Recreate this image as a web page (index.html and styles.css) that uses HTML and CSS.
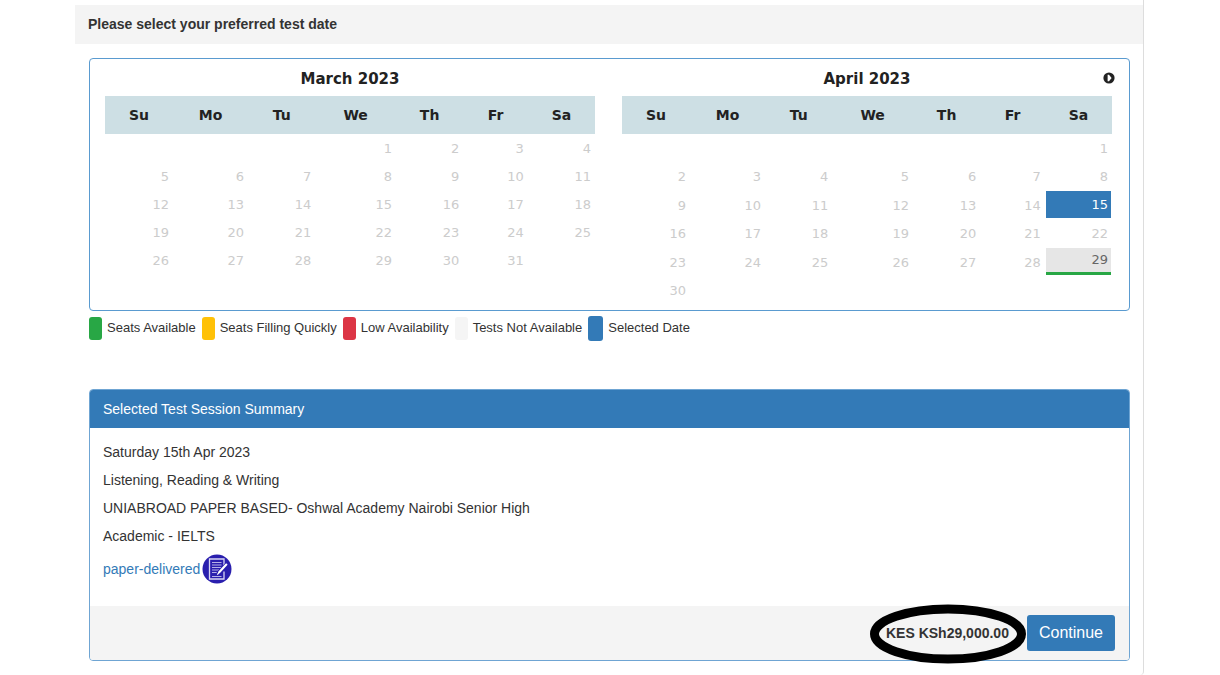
FILE: index.html
```html
<!DOCTYPE html>
<html lang="en">
<head>
<meta charset="utf-8">
<title>Select test date</title>
<link rel="stylesheet" href="styles.css">
</head>
<body>
<main class="panel">
  <h1 class="panel-title">Please select your preferred test date</h1>
  <div class="panel-body">
    <section class="calendar" aria-label="Test dates">
      <div class="month">
        <div class="month-head"><h2 class="month-title">March 2023</h2></div>
        <table class="days">
          <colgroup><col class="c-su"><col class="c-mo"><col class="c-tu"><col class="c-we"><col class="c-th"><col class="c-fr"><col class="c-sa"></colgroup>
          <thead><tr><th>Su</th><th>Mo</th><th>Tu</th><th>We</th><th>Th</th><th>Fr</th><th>Sa</th></tr></thead>
          <tbody>
            <tr><td></td><td></td><td></td><td>1</td><td>2</td><td>3</td><td>4</td></tr>
            <tr><td>5</td><td>6</td><td>7</td><td>8</td><td>9</td><td>10</td><td>11</td></tr>
            <tr><td>12</td><td>13</td><td>14</td><td>15</td><td>16</td><td>17</td><td>18</td></tr>
            <tr><td>19</td><td>20</td><td>21</td><td>22</td><td>23</td><td>24</td><td>25</td></tr>
            <tr><td>26</td><td>27</td><td>28</td><td>29</td><td>30</td><td>31</td><td></td></tr>
          </tbody>
        </table>
      </div>
      <div class="month">
        <div class="month-head">
          <h2 class="month-title">April 2023</h2>
          <button class="next" type="button" aria-label="Next month">
            <svg width="12" height="12" viewBox="0 0 12 12"><circle cx="6" cy="6" r="5.6" fill="#222"/><path d="M4.600 2.700H6L8.600 6 6 9.300H4.600Z" fill="#fff"/></svg>
          </button>
        </div>
        <table class="days">
          <colgroup><col class="c-su"><col class="c-mo"><col class="c-tu"><col class="c-we"><col class="c-th"><col class="c-fr"><col class="c-sa"></colgroup>
          <thead><tr><th>Su</th><th>Mo</th><th>Tu</th><th>We</th><th>Th</th><th>Fr</th><th>Sa</th></tr></thead>
          <tbody>
            <tr><td></td><td></td><td></td><td></td><td></td><td></td><td>1</td></tr>
            <tr><td>2</td><td>3</td><td>4</td><td>5</td><td>6</td><td>7</td><td>8</td></tr>
            <tr><td>9</td><td>10</td><td>11</td><td>12</td><td>13</td><td>14</td><td class="pick"><button class="day day-selected" type="button">15</button></td></tr>
            <tr><td>16</td><td>17</td><td>18</td><td>19</td><td>20</td><td>21</td><td>22</td></tr>
            <tr><td>23</td><td>24</td><td>25</td><td>26</td><td>27</td><td>28</td><td class="pick"><button class="day day-open" type="button">29</button></td></tr>
            <tr><td>30</td><td></td><td></td><td></td><td></td><td></td><td></td></tr>
          </tbody>
        </table>
      </div>
    </section>

    <ul class="legend">
      <li><span class="swatch green"></span>Seats Available</li>
      <li><span class="swatch yellow"></span>Seats Filling Quickly</li>
      <li><span class="swatch red"></span>Low Availability</li>
      <li><span class="swatch gray"></span>Tests Not Available</li>
      <li><span class="swatch blue"></span>Selected Date</li>
    </ul>

    <section class="summary">
      <h2 class="summary-title">Selected Test Session Summary</h2>
      <div class="summary-body">
        <p>Saturday 15th Apr 2023</p>
        <p>Listening, Reading &amp; Writing</p>
        <p>UNIABROAD PAPER BASED- Oshwal Academy Nairobi Senior High</p>
        <p>Academic - IELTS</p>
        <a class="delivery" href="#">paper-delivered
          <svg width="30" height="30" viewBox="0 0 30 30" aria-hidden="true">
            <circle cx="15" cy="15" r="14.5" fill="#2a1fae"/>
            <path d="M22 17.5V25H7.500V5H22v6.500" fill="none" stroke="#d9d6f3" stroke-width="1.300"/>
            <path d="M10 8.500h9.500M10 11h9.500M10 13.500h9.500M10 16h7M10 18.500h5M10 22.500h9.500" stroke="#b5b0e6" stroke-width="1"/>
            <path d="M24.500 10.500 17 18.500 15.500 21" fill="none" stroke="#2a1fae" stroke-width="4"/>
            <path d="M24.300 10.600 17.200 18.200" stroke="#fff" stroke-width="2.200" stroke-linecap="round"/>
            <path d="M17.500 18.200 15.300 20.700" stroke="#fff" stroke-width="1.200"/>
          </svg>
        </a>
      </div>
      <div class="summary-foot">
        <strong class="price">KES KSh29,000.00
          <svg class="ring" viewBox="0 0 156 60" aria-hidden="true"><ellipse cx="78" cy="30" rx="73.500" ry="25" fill="none" stroke="#000" stroke-width="9"/></svg>
        </strong>
        <button class="continue" type="button">Continue</button>
      </div>
    </section>
  </div>
</main>
</body>
</html>
```
FILE: styles.css
```css
* { box-sizing: border-box; }
body {
  margin: 0;
  padding: 0 76px 0 75px;
  background: #fff;
  color: #333;
  font: 14px/20px "Liberation Sans", Arial, sans-serif;
}
h1, h2, p, ul { margin: 0; padding: 0; }
button { font: inherit; border: 0; padding: 0; cursor: pointer; }

.panel {
  padding-top: 5px;
  border-right: 1px solid #ddd;
  border-radius: 0 0 4px 4px;
}
.panel-title {
  padding: 9px 13px 10px;
  background: #f4f4f4;
  font-size: 14px;
  line-height: 20px;
}
.panel-body { padding: 14px 13px 14px 14px; }

.calendar {
  display: flex;
  gap: 27px;
  padding: 6px 17px 6px 15px;
  border: 1px solid #5a9bd0;
  border-radius: 4px;
  font-family: "DejaVu Sans", Verdana, sans-serif;
}
.month { flex: 1; }
.month-head {
  position: relative;
  padding: 4px 0 7px;
}
.month-title {
  color: #222;
  font-size: 15px;
  line-height: 20px;
  text-align: center;
}
.next {
  position: absolute;
  top: 7px;
  right: -3px;
  display: flex;
  background: none;
}

.days {
  width: 100%;
  table-layout: fixed;
  border-collapse: collapse;
}
.c-su { width: 13.9%; }
.c-mo { width: 15.3%; }
.c-tu { width: 13.7%; }
.c-we { width: 16.5%; }
.c-th { width: 13.7%; }
.c-fr { width: 13.2%; }
.c-sa { width: 13.7%; }
.days th {
  height: 38px;
  padding: 0;
  background: #cddfe4;
  color: #222;
}
.days td {
  height: 28px;
  padding: 2px 4px 0;
  color: #ccc;
  font-size: 13px;
  text-align: right;
}
.days .pick { padding: 1px; }
.day {
  display: block;
  width: 100%;
  height: 27px;
  padding: 0 3px;
  text-align: right;
}
.day-selected { background: #337ab7; color: #fff; }
.day-open {
  background: #e6e6e6;
  border-bottom: 3px solid #28a745;
  color: #666;
}

.legend {
  display: flex;
  flex-wrap: wrap;
  gap: 6px;
  padding-top: 4px;
  font-size: 13px;
  list-style: none;
}
.legend li { display: flex; align-items: center; gap: 5px; height: 26px; }
.swatch { width: 13px; height: 23px; border-radius: 3px; }
.green { background: #28a745; }
.yellow { background: #ffc107; }
.red { background: #dc3545; }
.gray { background: #f5f5f5; }
.blue { width: 15px; height: 25px; background: #337ab7; }

.summary {
  margin-top: 48px;
  border: 1px solid #6fa5d3;
  border-radius: 4px;
}
.summary-title {
  padding: 9px 13px;
  border-radius: 3px 3px 0 0;
  background: #337ab7;
  color: #fff;
  font-size: 14px;
  font-weight: 400;
  line-height: 20px;
}
.summary-body { padding: 14px 13px 22px; }
.summary-body p { margin-bottom: 8px; }
.delivery {
  display: inline-flex;
  align-items: center;
  gap: 2px;
  color: #337ab7;
  text-decoration: none;
}
.delivery svg { display: block; }
.summary-foot {
  display: flex;
  align-items: center;
  justify-content: flex-end;
  gap: 18px;
  padding: 9px 14px;
  border-radius: 0 0 3px 3px;
  background: #f4f4f4;
}
.price { position: relative; }
.ring {
  position: absolute;
  top: -19px;
  left: -16px;
  width: 156px;
  height: 60px;
}
.continue {
  height: 36px;
  padding: 0 12px;
  border-radius: 3px;
  background: #337ab7;
  color: #fff;
  font-size: 16px;
}
```
